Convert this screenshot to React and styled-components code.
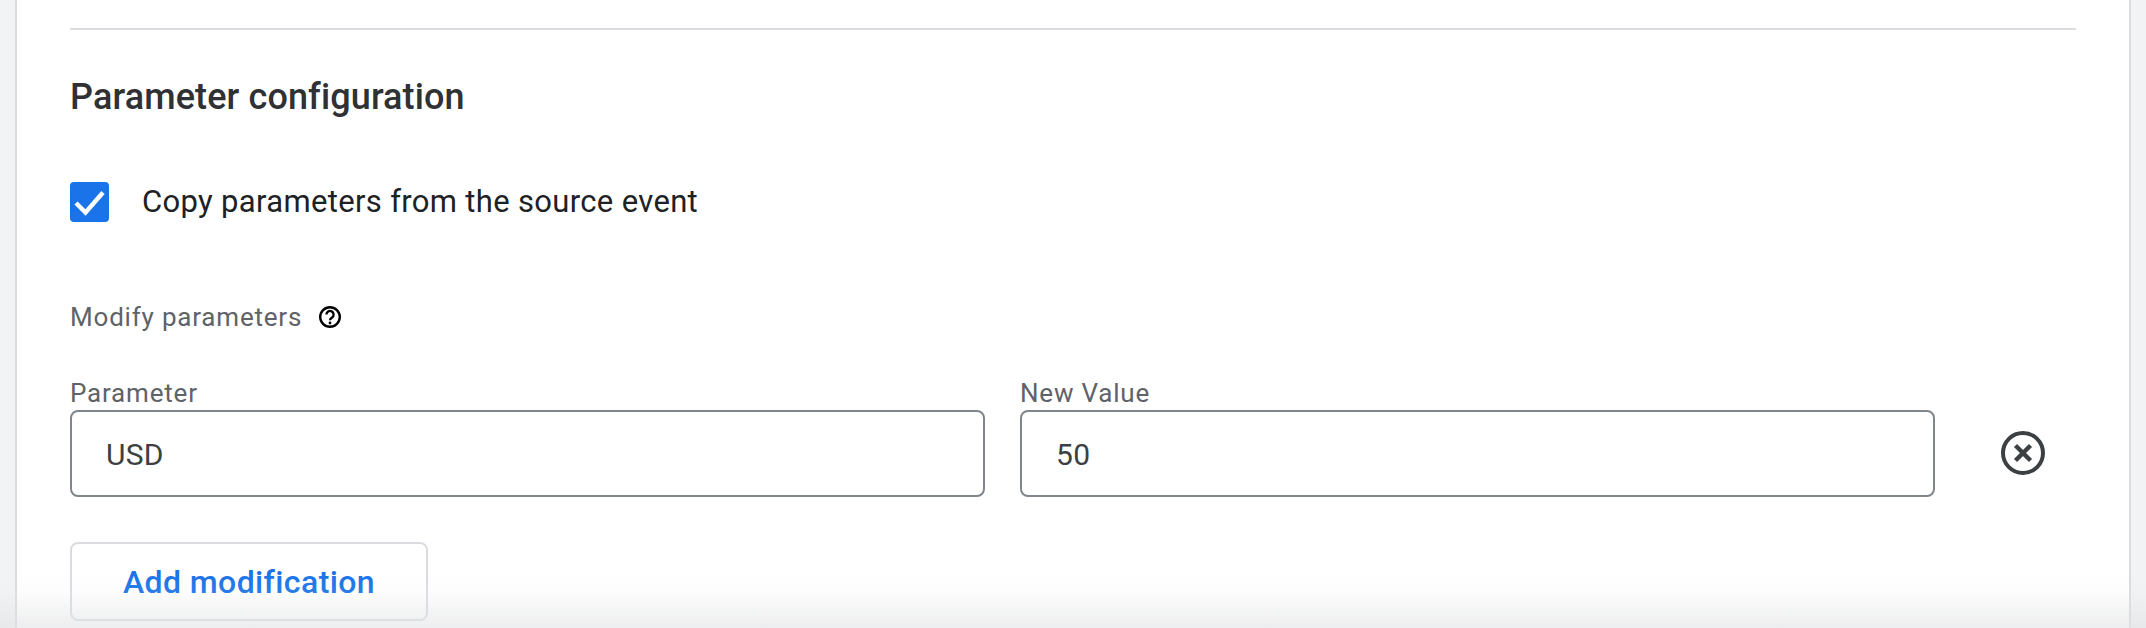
import styled, { createGlobalStyle } from 'styled-components'

const GlobalStyle = createGlobalStyle`
  html, body {
    margin: 0;
    height: 628px;
    overflow: hidden;
    background: #f1f3f4;
    font-family: Roboto, "Liberation Sans", sans-serif;
  }
`

const Page = styled.div`
  position: relative;
  height: 628px;
  padding: 0 15px;
  box-sizing: border-box;
  overflow: hidden;
`

const Panel = styled.main`
  height: 100%;
  box-sizing: border-box;
  background: #fff;
  border-left: 2px solid #dadce0;
  border-right: 2px solid #dadce0;
  padding: 28px 53px 0;
`

const Divider = styled.hr`
  margin: 0;
  border: 0;
  height: 2px;
  background: #dadce0;
`

const Heading = styled.h2`
  margin: 0;
  padding-top: 45px;
  font-size: 36px;
  line-height: 44px;
  font-weight: 500;
  letter-spacing: 0.12px;
  color: #303134;
`

const CheckRow = styled.label`
  display: flex;
  align-items: center;
  gap: 33px;
  margin-top: 63px;
  height: 40px;
  font-size: 31px;
  letter-spacing: 0.33px;
  color: #202124;
`

const CheckText = styled.span`
  margin-top: -2px;
`

const CheckBox = styled.span`
  display: flex;
  align-items: center;
  justify-content: center;
  width: 39px;
  height: 40px;
  border-radius: 4px;
  background: #1a73e8;
`

const ModifyRow = styled.div`
  display: flex;
  align-items: center;
  gap: 16px;
  margin-top: 73px;
  height: 44px;
  font-size: 26px;
  letter-spacing: 0.8px;
  color: #5f6368;
`

const FieldRow = styled.div`
  display: flex;
  align-items: flex-end;
  gap: 35px;
  margin-top: 41px;
`

const Field = styled.div`
  width: ${({ $width }) => $width}px;
  flex: none;
`

const FieldLabel = styled.div`
  font-size: 26px;
  line-height: 26px;
  padding-bottom: 4px;
  letter-spacing: 0.8px;
  color: #5f6368;
`

const InputBox = styled.div`
  height: 87px;
  box-sizing: border-box;
  border: 2px solid #80868b;
  border-radius: 8px;
  padding: 2px 0 0 34px;
  display: flex;
  align-items: center;
  font-size: 30px;
  letter-spacing: 0.3px;
  color: #3c4043;
`

const RemoveButton = styled.span`
  display: flex;
  width: 44px;
  height: 44px;
  margin: 0 0 22px 31px;
`

const AddButton = styled.button`
  display: block;
  width: 358px;
  height: 79px;
  margin-top: 45px;
  box-sizing: border-box;
  background: #fff;
  border: 2px solid #dadce0;
  border-radius: 8px;
  font-family: inherit;
  font-size: 32px;
  font-weight: 500;
  letter-spacing: 0.4px;
  color: #1a73e8;
`

const BottomFade = styled.div`
  position: absolute;
  left: 0;
  right: 0;
  bottom: 0;
  height: 56px;
  pointer-events: none;
  background: linear-gradient(
    to bottom,
    rgba(225, 226, 228, 0),
    rgba(225, 226, 228, 0.08) 35%,
    rgba(225, 226, 228, 0.6)
  );
`

const CheckIcon = () => (
  <svg width="34" height="34" viewBox="0 0 34 34" fill="none">
    <path d="M3 18 12.500 27.500 30 7.500" stroke="#fff" strokeWidth="4.400" />
  </svg>
)

const HelpIcon = () => (
  <svg width="24" height="24" viewBox="0 0 24 24" fill="none">
    <circle cx="12" cy="12" r="9.800" stroke="#000" strokeWidth="2.400" />
    <path d="M8.400 9.600a3.600 3.600 0 1 1 5.700 2.900c-1.300.9-2.100 1.500-2.100 2.800" stroke="#000" strokeWidth="2.300" />
    <circle cx="12" cy="18" r="1.400" fill="#000" />
  </svg>
)

const RemoveIcon = () => (
  <svg width="44" height="44" viewBox="0 0 44 44" fill="none">
    <circle cx="22" cy="22" r="20" stroke="#3c4043" strokeWidth="4" />
    <path d="M14.500 14.500 29.500 29.500M29.500 14.500 14.500 29.500" stroke="#3c4043" strokeWidth="4.400" />
  </svg>
)

const App = () => (
  <>
    <GlobalStyle />
    <Page>
      <Panel>
        <Divider />
        <Heading>Parameter configuration</Heading>
        <CheckRow>
          <CheckBox>
            <CheckIcon />
          </CheckBox>
          <CheckText>Copy parameters from the source event</CheckText>
        </CheckRow>
        <ModifyRow>
          Modify parameters
          <HelpIcon />
        </ModifyRow>
        <FieldRow>
          <Field $width={915}>
            <FieldLabel>Parameter</FieldLabel>
            <InputBox>USD</InputBox>
          </Field>
          <Field $width={915}>
            <FieldLabel>New Value</FieldLabel>
            <InputBox>50</InputBox>
          </Field>
          <RemoveButton>
            <RemoveIcon />
          </RemoveButton>
        </FieldRow>
        <AddButton>Add modification</AddButton>
      </Panel>
      <BottomFade />
    </Page>
  </>
)

export default App
